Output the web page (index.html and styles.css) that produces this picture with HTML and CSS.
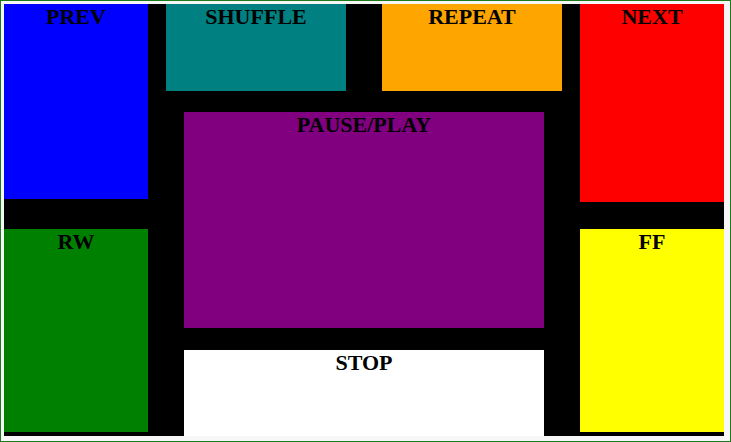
FILE: index.html
```html
<!DOCTYPE html>
<html>
<head>
<meta charset="utf-8">
<link rel="stylesheet" href="styles.css">
</head>
<body>
<div class="frame">
  <div class="player">
    <div class="btn prev">PREV</div>
    <div class="btn shuffle">SHUFFLE</div>
    <div class="btn repeat">REPEAT</div>
    <div class="btn next">NEXT</div>
    <div class="btn play">PAUSE/PLAY</div>
    <div class="btn rw">RW</div>
    <div class="btn ff">FF</div>
    <div class="btn stop">STOP</div>
  </div>
</div>
</body>
</html>
```

FILE: styles.css
```css
html, body {
  margin: 0;
  padding: 0;
  background: #ffffff;
}
.frame {
  box-sizing: border-box;
  width: 731px;
  height: 442px;
  border: 1px solid #1c7c1c;
  padding: 3px;
  background: #f7f7f7;
}
.player {
  width: 720px;
  height: 432px;
  background: #000000;
  display: grid;
  grid-template-columns: 144px 18px 18px 162px 36px 162px 18px 18px 144px;
  grid-template-rows: 87px 21px 87px 3px 27px 99px 22px 82px 4px;
}
.btn {
  font-family: "Liberation Serif", "Times New Roman", serif;
  font-weight: bold;
  font-size: 22px;
  text-align: center;
  color: #000000;
}
.prev { grid-column: 1; grid-row: 1 / 4; background: #0000ff; }
.shuffle { grid-column: 3 / 5; grid-row: 1; background: #008080; }
.repeat { grid-column: 6 / 8; grid-row: 1; background: #ffa500; }
.next { grid-column: 9; grid-row: 1 / 5; background: #ff0000; }
.play { grid-column: 4 / 7; grid-row: 3 / 7; background: #800080; }
.rw { grid-column: 1; grid-row: 6 / 9; background: #008000; }
.ff { grid-column: 9; grid-row: 6 / 9; background: #ffff00; }
.stop { grid-column: 4 / 7; grid-row: 8 / 10; background: #ffffff; }
```
